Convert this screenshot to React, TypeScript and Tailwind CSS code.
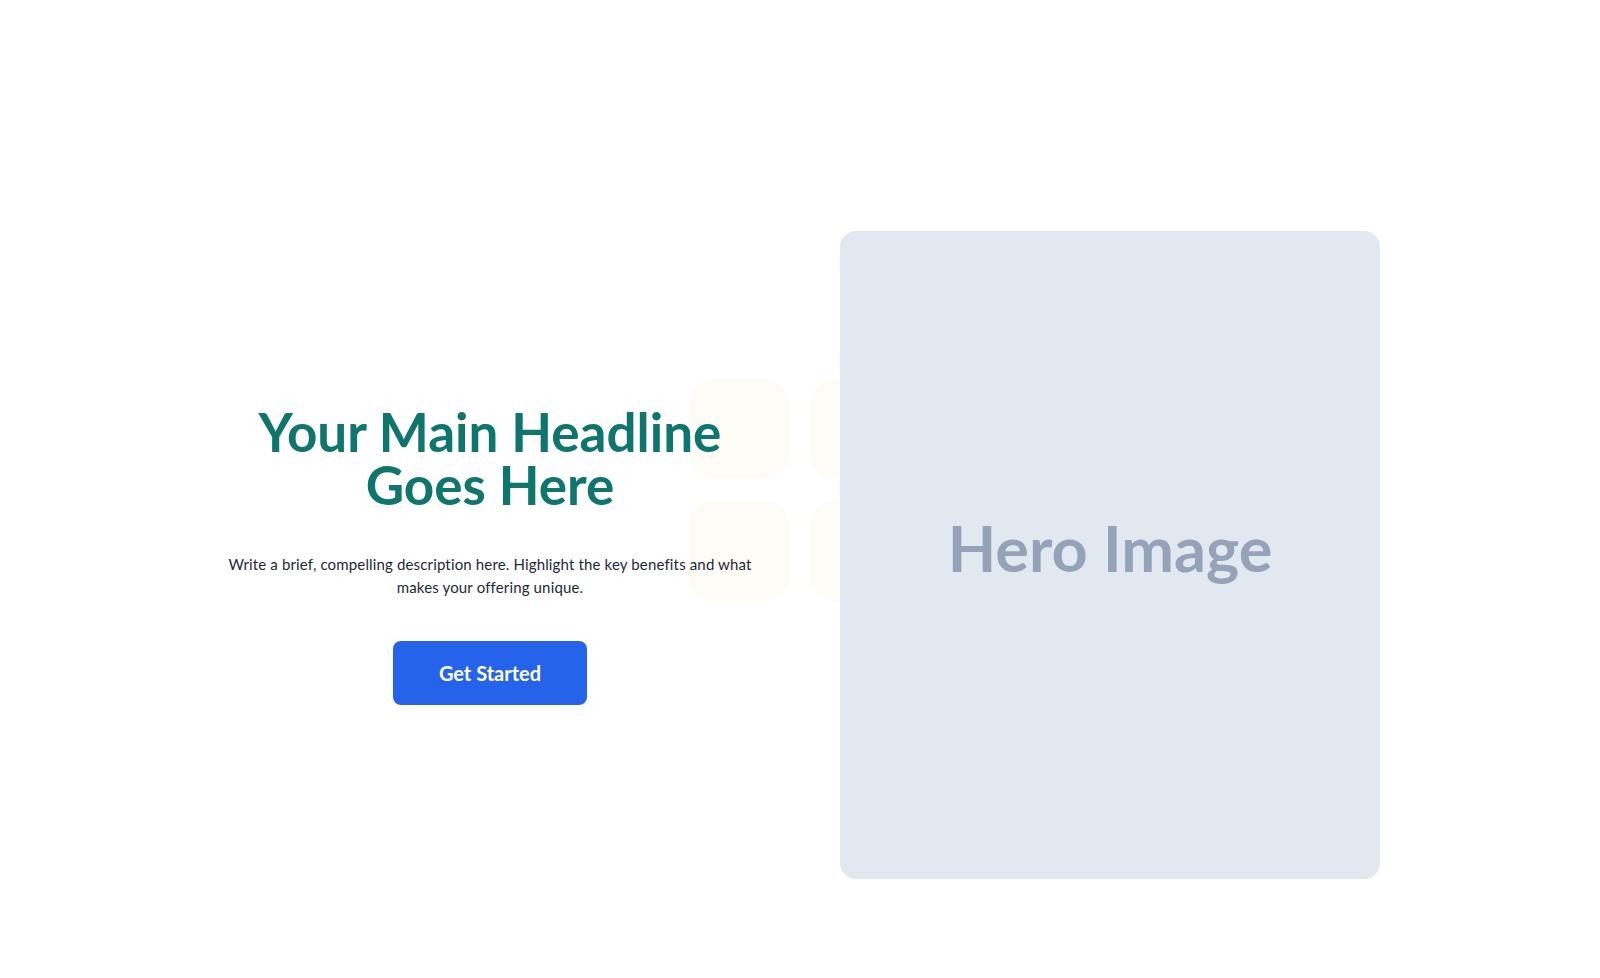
import React from "react";

export default function App() {
  return (
    <div className="relative min-h-[978px] w-full overflow-hidden bg-white" style={{ fontFamily: "Lato, 'Noto Sans', sans-serif" }}>
      <div className="pointer-events-none absolute left-1/2 top-1/2 grid -translate-x-1/2 -translate-y-1/2 grid-cols-2 gap-[22px]">
        <div className="h-[100px] w-[100px] rounded-[24px] bg-[#fdfcf6]" />
        <div className="h-[100px] w-[100px] rounded-[24px] bg-[#fdfcf6]" />
        <div className="h-[100px] w-[100px] rounded-[24px] bg-[#fdfcf6]" />
        <div className="h-[100px] w-[100px] rounded-[24px] bg-[#fdfcf6]" />
      </div>
      <section className="relative mx-auto max-w-[1200px] px-5 pt-[231px] pb-[100px]">
        <div className="grid grid-cols-2 items-center gap-20">
          <div className="flex flex-col items-center text-center">
            <h1 className="text-[53px] font-bold leading-[53px] text-[#0f766e]">
              Your Main Headline
              <br />
              Goes Here
            </h1>
            <p className="mt-[42px] text-[15px] leading-[23px] tracking-[0.15px] text-[#1e293b]">
              Write a brief, compelling description here. Highlight the key benefits and what
              <br />
              makes your offering unique.
            </p>
            <button className="mt-[42px] flex h-16 w-[194px] items-center justify-center rounded-lg bg-[#2563eb] text-[20px] font-bold text-white">
              Get Started
            </button>
          </div>
          <div className="flex aspect-[5/6] w-full items-center justify-center rounded-2xl bg-[#e2e8f0] pb-4">
            <span className="text-[63px] font-bold leading-none text-[#94a3b8]">Hero Image</span>
          </div>
        </div>
      </section>
    </div>
  );
}
